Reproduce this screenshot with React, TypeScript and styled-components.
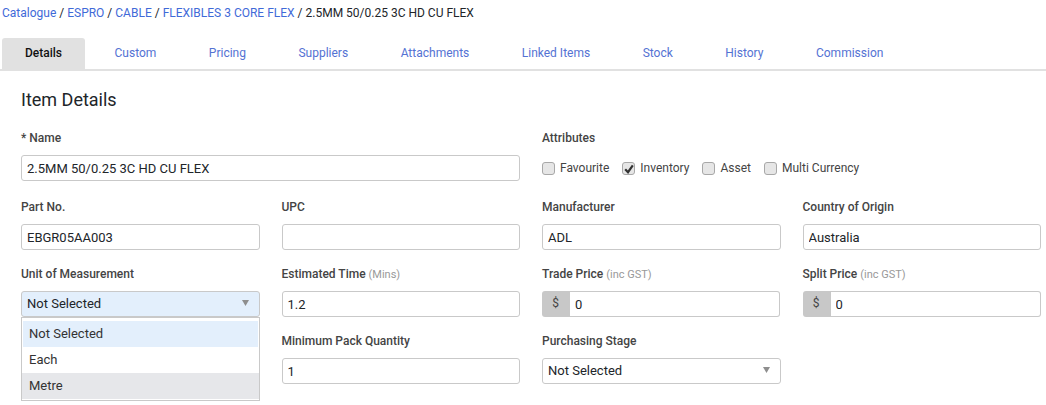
import styled, { createGlobalStyle } from 'styled-components'

const GlobalStyle = createGlobalStyle`
  html, body {
    margin: 0;
    padding: 0;
    background: #fff;
    font-family: Roboto, "Liberation Sans", sans-serif;
    font-size: 12px;
    color: #212529;
  }
`

const tabs = ['Details', 'Custom', 'Pricing', 'Suppliers', 'Attachments', 'Linked Items', 'Stock', 'History', 'Commission']
const crumbs = ['Catalogue', 'ESPRO', 'CABLE', 'FLEXIBLES 3 CORE FLEX']
const attributes = [
  { text: 'Favourite', checked: false },
  { text: 'Inventory', checked: true },
  { text: 'Asset', checked: false },
  { text: 'Multi Currency', checked: false }
]

function Arrow() {
  return (
    <ArrowIcon viewBox="0 0 7 6" aria-hidden="true">
      <path d="M0 0h7L3.5 6z" fill="#8e8e8e" />
    </ArrowIcon>
  )
}

export default function App() {
  return (
    <Page>
      <GlobalStyle />
      <Breadcrumb>
        {crumbs.map(text => (
          <span key={text}>
            <Crumb href="#">{text}</Crumb> /{' '}
          </span>
        ))}
        2.5MM 50/0.25 3C HD CU FLEX
      </Breadcrumb>

      <TabBar>
        {tabs.map((text, index) => (
          <Tab key={text} $active={index === 0}>
            {text}
          </Tab>
        ))}
      </TabBar>

      <Panel>
        <Title>Item Details</Title>
        <FormGrid>
          <WideField>
            <Label>* Name</Label>
            <Input defaultValue="2.5MM 50/0.25 3C HD CU FLEX" />
          </WideField>
          <WideField>
            <Label>Attributes</Label>
            <CheckRow>
              {attributes.map(({ text, checked }) => (
                <CheckLabel key={text}>
                  <CheckBox>
                    {checked && (
                      <svg viewBox="0 0 12 12" width="12" height="12" aria-hidden="true">
                        <path d="M2.2 6.2 5 9.2 9.8 2.4" fill="none" stroke="#333" strokeWidth="2.2" />
                      </svg>
                    )}
                  </CheckBox>
                  {text}
                </CheckLabel>
              ))}
            </CheckRow>
          </WideField>

          <Field>
            <Label>Part No.</Label>
            <Input defaultValue="EBGR05AA003" />
          </Field>
          <Field>
            <Label>UPC</Label>
            <Input defaultValue="" />
          </Field>
          <Field>
            <Label>Manufacturer</Label>
            <Input defaultValue="ADL" />
          </Field>
          <Field>
            <Label>Country of Origin</Label>
            <Input defaultValue="Australia" />
          </Field>

          <Field>
            <Label>Unit of Measurement</Label>
            <SelectWrap>
              <Select $open>
                Not Selected
                <Arrow />
              </Select>
              <Menu>
                <MenuItem $tone="selected">Not Selected</MenuItem>
                <MenuItem>Each</MenuItem>
                <MenuItem $tone="hover">Metre</MenuItem>
              </Menu>
            </SelectWrap>
          </Field>
          <Field>
            <Label>
              Estimated Time <Hint>(Mins)</Hint>
            </Label>
            <Input defaultValue="1.2" />
          </Field>
          <Field>
            <Label>
              Trade Price <Hint>(inc GST)</Hint>
            </Label>
            <PriceGroup $trim>
              <Addon>$</Addon>
              <PriceInput defaultValue="0" />
            </PriceGroup>
          </Field>
          <Field>
            <Label>
              Split Price <Hint>(inc GST)</Hint>
            </Label>
            <PriceGroup>
              <Addon>$</Addon>
              <PriceInput defaultValue="0" />
            </PriceGroup>
          </Field>

          <Field />
          <Field>
            <Label>Minimum Pack Quantity</Label>
            <Input defaultValue="1" />
          </Field>
          <Field>
            <Label>Purchasing Stage</Label>
            <Select>
              Not Selected
              <Arrow />
            </Select>
          </Field>
        </FormGrid>
      </Panel>
    </Page>
  )
}

const Page = styled.div`
  width: 1046px;
  height: 405px;
  overflow: hidden;
  padding-top: 6px;
  box-sizing: border-box;
`

const Breadcrumb = styled.div`
  height: 14px;
  line-height: 14px;
  padding-left: 2px;
  font-size: 12px;
  color: #212529;
  white-space: pre-wrap;
`

const Crumb = styled.a`
  color: #3f6ad8;
  text-decoration: none;
`

const TabBar = styled.div`
  display: flex;
  gap: 6.5px;
  margin-top: 18px;
  padding-left: 2px;
  border-bottom: 2px solid #e1e1e1;
`

const Tab = styled.div<{ $active?: boolean }>`
  height: 31px;
  line-height: 30px;
  padding: 0 23px;
  border-radius: 3px 3px 0 0;
  font-size: 12px;
  font-weight: ${({ $active }) => ($active ? 500 : 400)};
  color: ${({ $active }) => ($active ? '#111' : '#5472d3')};
  background: ${({ $active }) => ($active ? '#e1e1e1' : 'transparent')};
`

const Panel = styled.div`
  padding: 19px 5px 0 21px;
`

const Title = styled.h2`
  margin: 0;
  height: 20px;
  line-height: 20px;
  font-size: 18px;
  font-weight: 400;
  color: #212529;
`

const FormGrid = styled.div`
  display: grid;
  grid-template-columns: repeat(4, 1fr);
  column-gap: 22px;
  row-gap: 16px;
  margin-top: 20px;
`

const Field = styled.div`
  min-width: 0;
`

const WideField = styled(Field)`
  grid-column: span 2;
  margin-bottom: 2px;
`

const Label = styled.div`
  height: 14px;
  line-height: 16px;
  margin-bottom: 11px;
  font-size: 12px;
  font-weight: 500;
  color: #444;
`

const Hint = styled.span`
  font-size: 11px;
  font-weight: 400;
  color: #999;
`

const Input = styled.input`
  display: block;
  width: 100%;
  height: 26px;
  box-sizing: border-box;
  padding: 1px 5px 0;
  border: 1px solid #c9c9c9;
  border-radius: 3px;
  outline: none;
  font-family: inherit;
  font-size: 13px;
  color: #212529;
  background: #fff;
`

const CheckRow = styled.div`
  display: flex;
  gap: 13px;
  height: 26px;
  align-items: center;
`

const CheckLabel = styled.label`
  display: flex;
  align-items: center;
  gap: 5px;
  font-size: 12px;
  color: #444;
`

const CheckBox = styled.span`
  display: flex;
  width: 13px;
  height: 13px;
  margin-top: 1px;
  box-sizing: border-box;
  align-items: center;
  justify-content: center;
  border: 1px solid #a8a8a8;
  border-radius: 3px;
  background: #e6e6e6;

  svg {
    flex: none;
  }
`

const SelectWrap = styled.div`
  position: relative;
`

const Select = styled.div<{ $open?: boolean }>`
  display: flex;
  align-items: center;
  justify-content: space-between;
  height: 26px;
  box-sizing: border-box;
  padding: 0 10px 1px 5px;
  border: 1px solid #c9c9c9;
  border-radius: 3px;
  font-size: 13px;
  color: #212529;
  background: ${({ $open }) => ($open ? '#e3effc' : '#fff')};
`

const ArrowIcon = styled.svg`
  width: 7px;
  height: 6px;
  margin-bottom: 1px;
`

const Menu = styled.div`
  position: absolute;
  top: 26px;
  left: 0;
  right: 0;
  height: 84px;
  box-sizing: border-box;
  padding-top: 3px;
  border: 1px solid #c9c9c9;
  background: #fff;
`

const MenuItem = styled.div<{ $tone?: 'selected' | 'hover' }>`
  height: 26px;
  line-height: 26px;
  padding-left: ${({ $tone }) => ($tone === 'selected' ? '6px' : '7px')};
  margin: ${({ $tone }) => ($tone === 'selected' ? '0 1px' : '0')};
  font-size: 13px;
  color: #333;
  background: ${({ $tone }) =>
    $tone === 'selected' ? '#e3effc' : $tone === 'hover' ? '#e6e7ea' : 'transparent'};
`

const PriceGroup = styled.div<{ $trim?: boolean }>`
  display: flex;
  height: 26px;
  margin-right: ${({ $trim }) => ($trim ? '1px' : '0')};
`

const Addon = styled.span`
  display: flex;
  flex: none;
  width: 28px;
  box-sizing: border-box;
  padding: 0 1px 2px 0;
  align-items: center;
  justify-content: center;
  border-radius: 3px 0 0 3px;
  font-size: 12px;
  color: #444;
  background: #c8c8c8;
`

const PriceInput = styled(Input)`
  flex: 1;
  min-width: 0;
  border-left: none;
  border-radius: 0 3px 3px 0;
`
